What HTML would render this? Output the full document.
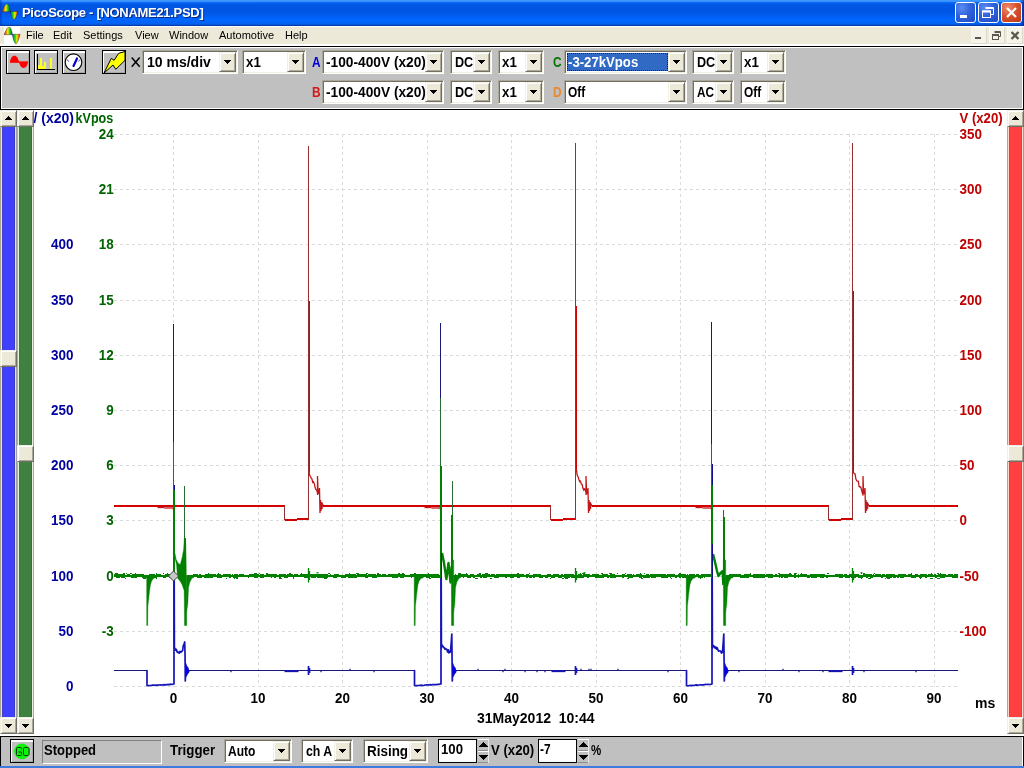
<!DOCTYPE html>
<html><head><meta charset="utf-8"><title>PicoScope</title>
<style>
*{box-sizing:border-box;margin:0;padding:0}
html,body{width:1024px;height:768px;overflow:hidden;background:#fff;font-family:"Liberation Sans",sans-serif}
#root{position:relative;width:1024px;height:768px;overflow:hidden;background:#fff;will-change:transform;opacity:0.9999}
.abs{position:absolute}
/* title bar */
#title{position:absolute;left:0;top:0;width:1024px;height:26px;
 background:linear-gradient(#3D95FF 0%,#3D95FF 5%,#0A68F2 10%,#0057E6 17%,#0054E0 35%,#005AEA 55%,#0066FF 75%,#0562F2 90%,#0455DC 95%,#0A3CA8 97%,#0A3CA8 100%)}
#title .tt{position:absolute;left:22px;top:5px;font-size:13px;font-weight:bold;color:#fff;letter-spacing:-0.3px;line-height:16px;text-shadow:1px 1px 0 #0A2A80;white-space:pre}
.wb{position:absolute;top:2px;width:21px;height:21px;border:1px solid #fff;border-radius:3px;
 background:radial-gradient(circle at 30% 25%,#5C8CF2 0%,#2F62DC 45%,#1E49C4 100%)}
.wb.cl{background:radial-gradient(circle at 30% 25%,#F0896A 0%,#D6502C 50%,#B8391A 100%)}
/* menu */
#menu{position:absolute;left:0;top:26px;width:1024px;height:20px;background:#ECE9D8;border-top:1px solid #fff;border-bottom:2px solid #fff}
#menu span{position:absolute;top:2px;font-size:11px;line-height:13px;color:#000}
.mb{position:absolute;top:27px;width:16px;height:17px;background:#F4F3EA;border:1px solid #F8F7F0;border-right-color:#DDDACB;border-bottom-color:#DDDACB}
/* toolbar */
#tb{position:absolute;left:0;top:46px;width:1024px;height:64px;background:#C0C0C0;border:1px solid #000;box-shadow:inset 1px 1px 0 #fff,inset -1px -1px 0 #fff}
.btn{position:absolute;width:24px;height:24px;background:#C0C0C0;border:1px solid #000;box-shadow:inset 1px 2px 0 #fff,inset -1px -1px 0 #A8A8A8}
.cb{position:absolute;background:#fff;border:1px solid;border-color:#ACA899 #fff #fff #ACA899;box-shadow:inset 1px 1px 0 #716F64,inset -1px -1px 0 #F1EFE2}
.ct{position:absolute;top:3px;font-size:14px;font-weight:bold;line-height:16px;color:#000;white-space:pre;transform-origin:0 50%}
.sel{position:absolute;left:2px;top:2px;height:18px;background:#316AC5;outline:1px dotted #1C2440;outline-offset:-1px}
.db{position:absolute;right:1px;top:1px;width:17px;height:20px;background:#ECE9D8;border:1px solid;border-color:#F1EFE2 #716F64 #716F64 #F1EFE2;box-shadow:inset 1px 1px 0 #fff,inset -1px -1px 0 #ACA899}
.db .ar{position:absolute;left:4px;top:7px;display:block}
.lab{position:absolute;font-size:14px;font-weight:bold;line-height:16px;white-space:pre;transform-origin:0 50%}
/* scrollbars */
.sb{position:absolute;width:17px;height:17px;background:#ECE9D8;border:1px solid;border-color:#F1EFE2 #716F64 #716F64 #F1EFE2;box-shadow:inset 1px 1px 0 #fff,inset -1px -1px 0 #ACA899}
.sb .ar{position:absolute;left:4px;top:5px;display:block}
.trk{position:absolute;width:17px;top:126px;height:592px}
/* status */
#st{position:absolute;left:0;top:736px;width:1024px;height:30px;background:#C0C0C0;border-top:1px solid #000;border-left:1px solid #000;border-right:1px solid #000;box-shadow:inset -1px 0 0 #fff}
.ed{position:absolute;background:#fff;border:1px solid #000}
.sp{position:absolute;width:11px;height:12px;background:#C0C0C0;box-shadow:inset 0 1px 0 #fff,inset -1px 0 0 #E8E8E8,inset 0 -1px 0 #909090}
.sp .ar{position:absolute;left:1px;display:block}
#plot{position:absolute;left:0;top:0}
</style></head>
<body><div id="root">
<svg id="plot" width="1024" height="768" viewBox="0 0 1024 768">
<g stroke="#DADADA" stroke-width="1" stroke-dasharray="3 3" shape-rendering="crispEdges"><line x1="114" x2="959" y1="134.5" y2="134.5"/><line x1="114" x2="959" y1="189.5" y2="189.5"/><line x1="114" x2="959" y1="244.5" y2="244.5"/><line x1="114" x2="959" y1="300.5" y2="300.5"/><line x1="114" x2="959" y1="355.5" y2="355.5"/><line x1="114" x2="959" y1="410.5" y2="410.5"/><line x1="114" x2="959" y1="465.5" y2="465.5"/><line x1="114" x2="959" y1="520.5" y2="520.5"/><line x1="114" x2="959" y1="576.5" y2="576.5"/><line x1="114" x2="959" y1="631.5" y2="631.5"/><line x1="114" x2="959" y1="686.5" y2="686.5"/><line x1="173.5" x2="173.5" y1="134" y2="687"/><line x1="258.5" x2="258.5" y1="134" y2="687"/><line x1="342.5" x2="342.5" y1="134" y2="687"/><line x1="427.5" x2="427.5" y1="134" y2="687"/><line x1="511.5" x2="511.5" y1="134" y2="687"/><line x1="596.5" x2="596.5" y1="134" y2="687"/><line x1="680.5" x2="680.5" y1="134" y2="687"/><line x1="765.5" x2="765.5" y1="134" y2="687"/><line x1="849.5" x2="849.5" y1="134" y2="687"/><line x1="934.5" x2="934.5" y1="134" y2="687"/></g>
<g font-family="Liberation Sans, sans-serif" font-weight="bold" font-size="14px"><text transform="translate(73.5,249) scale(0.96,1)" text-anchor="end" fill="#0000A0" style="white-space:pre">400</text><text transform="translate(73.5,305) scale(0.96,1)" text-anchor="end" fill="#0000A0" style="white-space:pre">350</text><text transform="translate(73.5,360) scale(0.96,1)" text-anchor="end" fill="#0000A0" style="white-space:pre">300</text><text transform="translate(73.5,415) scale(0.96,1)" text-anchor="end" fill="#0000A0" style="white-space:pre">250</text><text transform="translate(73.5,470) scale(0.96,1)" text-anchor="end" fill="#0000A0" style="white-space:pre">200</text><text transform="translate(73.5,525) scale(0.96,1)" text-anchor="end" fill="#0000A0" style="white-space:pre">150</text><text transform="translate(73.5,581) scale(0.96,1)" text-anchor="end" fill="#0000A0" style="white-space:pre">100</text><text transform="translate(73.5,636) scale(0.96,1)" text-anchor="end" fill="#0000A0" style="white-space:pre">50</text><text transform="translate(73.5,691) scale(0.96,1)" text-anchor="end" fill="#0000A0" style="white-space:pre">0</text><text transform="translate(113.8,139) scale(0.96,1)" text-anchor="end" fill="#006400" style="white-space:pre">24</text><text transform="translate(113.8,194) scale(0.96,1)" text-anchor="end" fill="#006400" style="white-space:pre">21</text><text transform="translate(113.8,249) scale(0.96,1)" text-anchor="end" fill="#006400" style="white-space:pre">18</text><text transform="translate(113.8,305) scale(0.96,1)" text-anchor="end" fill="#006400" style="white-space:pre">15</text><text transform="translate(113.8,360) scale(0.96,1)" text-anchor="end" fill="#006400" style="white-space:pre">12</text><text transform="translate(113.8,415) scale(0.96,1)" text-anchor="end" fill="#006400" style="white-space:pre">9</text><text transform="translate(113.8,470) scale(0.96,1)" text-anchor="end" fill="#006400" style="white-space:pre">6</text><text transform="translate(113.8,525) scale(0.96,1)" text-anchor="end" fill="#006400" style="white-space:pre">3</text><text transform="translate(113.8,581) scale(0.96,1)" text-anchor="end" fill="#006400" style="white-space:pre">0</text><text transform="translate(113.8,636) scale(0.96,1)" text-anchor="end" fill="#006400" style="white-space:pre">-3</text><text transform="translate(959.5,139) scale(0.96,1)" text-anchor="start" fill="#C00000" style="white-space:pre">350</text><text transform="translate(959.5,194) scale(0.96,1)" text-anchor="start" fill="#C00000" style="white-space:pre">300</text><text transform="translate(959.5,249) scale(0.96,1)" text-anchor="start" fill="#C00000" style="white-space:pre">250</text><text transform="translate(959.5,305) scale(0.96,1)" text-anchor="start" fill="#C00000" style="white-space:pre">200</text><text transform="translate(959.5,360) scale(0.96,1)" text-anchor="start" fill="#C00000" style="white-space:pre">150</text><text transform="translate(959.5,415) scale(0.96,1)" text-anchor="start" fill="#C00000" style="white-space:pre">100</text><text transform="translate(959.5,470) scale(0.96,1)" text-anchor="start" fill="#C00000" style="white-space:pre">50</text><text transform="translate(959.5,525) scale(0.96,1)" text-anchor="start" fill="#C00000" style="white-space:pre">0</text><text transform="translate(959.5,581) scale(0.96,1)" text-anchor="start" fill="#C00000" style="white-space:pre">-50</text><text transform="translate(959.5,636) scale(0.96,1)" text-anchor="start" fill="#C00000" style="white-space:pre">-100</text><text transform="translate(173.5,703) scale(0.96,1)" text-anchor="middle" fill="#000" style="white-space:pre">0</text><text transform="translate(258.0,703) scale(0.96,1)" text-anchor="middle" fill="#000" style="white-space:pre">10</text><text transform="translate(342.5,703) scale(0.96,1)" text-anchor="middle" fill="#000" style="white-space:pre">20</text><text transform="translate(427.0,703) scale(0.96,1)" text-anchor="middle" fill="#000" style="white-space:pre">30</text><text transform="translate(511.5,703) scale(0.96,1)" text-anchor="middle" fill="#000" style="white-space:pre">40</text><text transform="translate(596.0,703) scale(0.96,1)" text-anchor="middle" fill="#000" style="white-space:pre">50</text><text transform="translate(680.5,703) scale(0.96,1)" text-anchor="middle" fill="#000" style="white-space:pre">60</text><text transform="translate(765.0,703) scale(0.96,1)" text-anchor="middle" fill="#000" style="white-space:pre">70</text><text transform="translate(849.5,703) scale(0.96,1)" text-anchor="middle" fill="#000" style="white-space:pre">80</text><text transform="translate(934.0,703) scale(0.96,1)" text-anchor="middle" fill="#000" style="white-space:pre">90</text><text transform="translate(975,708) scale(1.0,1)" text-anchor="start" fill="#000" style="white-space:pre">ms</text><text transform="translate(477,723) scale(1.0,1)" text-anchor="start" fill="#000" style="white-space:pre">31May2012  10:44</text><text transform="translate(33.5,123) scale(1.0,1)" text-anchor="start" fill="#0000A0" style="white-space:pre">/ (x20)</text><text transform="translate(75.5,123) scale(0.9,1)" text-anchor="start" fill="#006400" style="white-space:pre">kVpos</text><text transform="translate(959.5,123) scale(0.94,1)" text-anchor="start" fill="#C00000" style="white-space:pre">V (x20)</text></g>
<g fill="none" stroke="#D40000" stroke-width="2" shape-rendering="crispEdges"><polyline points="114.0,506.0 284.5,506.0"/><polyline points="284.5,520.0 294.5,519.6 308.5,519.0"/><polyline points="309.0,301.0 309.0,472.0"/><polyline points="323.0,506.0 550.5,506.0"/><polyline points="550.5,520.0 560.5,519.6 575.5,519.0"/><polyline points="576.0,306.0 576.0,472.0"/><polyline points="591.5,506.0 828.5,506.0"/><polyline points="828.5,520.0 838.5,519.6 852.5,519.0"/><polyline points="853.0,291.0 853.0,472.0"/><polyline points="868.5,506.0 958.0,506.0"/></g><g fill="none" stroke="#983030" stroke-width="1" shape-rendering="crispEdges"><polyline points="284.5,506.0 284.5,520.0"/><polyline points="308.5,519.5 308.5,146.0"/><polyline points="550.5,506.0 550.5,520.0"/><polyline points="575.5,519.5 575.5,143.0"/><polyline points="828.5,506.0 828.5,520.0"/><polyline points="852.5,519.5 852.5,143.0"/></g><g fill="none" stroke="#C01818" stroke-width="1.3"><polyline points="309.0,470.0 309.5,474.6 310.3,476.4 311.1,478.0 311.9,478.9 312.7,482.3 313.5,481.7 314.3,483.7 315.1,487.6 315.9,489.5 316.7,490.4 317.5,492.7 317.5,495.0 317.5,476.0 318.0,490.0 319.0,494.0 319.5,488.0 320.0,513.0 320.5,500.0 321.0,511.0 321.5,502.0 322.0,509.0 322.5,504.0 323.5,506.0"/><polyline points="576.0,470.0 576.5,470.4 577.3,475.7 578.1,476.7 578.9,479.5 579.7,481.5 580.5,481.1 581.3,484.1 582.1,484.5 582.9,488.1 583.7,490.0 584.5,489.0 585.3,490.3 586.1,492.9 586.0,495.0 586.0,476.0 586.5,490.0 587.5,494.0 588.0,488.0 588.5,513.0 589.0,500.0 589.5,511.0 590.0,502.0 590.5,509.0 591.0,504.0 592.0,506.0"/><polyline points="853.0,470.0 853.5,472.6 854.3,473.6 855.1,473.9 855.9,479.0 856.7,480.7 857.5,481.2 858.3,481.4 859.1,486.6 859.9,487.0 860.7,486.9 861.5,489.7 862.3,492.8 863.1,495.6 863.0,495.0 863.0,476.0 863.5,490.0 864.5,494.0 865.0,488.0 865.5,513.0 866.0,500.0 866.5,511.0 867.0,502.0 867.5,509.0 868.0,504.0 869.0,506.0"/><polyline points="157.5,507.5 164.5,507.5"/><polyline points="164.5,508.0 173.5,508.0"/><polyline points="173.5,506.0 173.5,510.0"/><polyline points="424.5,507.5 431.5,507.5"/><polyline points="431.5,508.0 440.5,508.0"/><polyline points="440.5,506.0 440.5,510.0"/><polyline points="695.5,507.5 702.5,507.5"/><polyline points="702.5,508.0 711.5,508.0"/><polyline points="711.5,506.0 711.5,510.0"/></g><g fill="none" stroke="#18187C" stroke-width="1" shape-rendering="crispEdges"></g><g fill="none" stroke="#18187C" stroke-width="1.15"><polyline points="114.0,670.5 147.0,670.5"/><polyline points="189.0,670.5 230.5,670.5 231.0,671.5 231.5,670.5 320.5,670.5 321.0,671.5 321.5,670.5 349.5,670.5 350.0,669.5 350.5,670.5 373.5,670.5 374.0,671.5 374.5,670.5 414.5,670.5"/><polyline points="456.0,670.5 477.5,670.5 478.0,669.5 478.5,670.5 502.5,670.5 503.0,671.5 503.5,670.5 504.5,670.5 505.0,669.5 505.5,670.5 524.5,670.5 525.0,671.5 525.5,670.5 536.5,670.5 537.0,671.5 537.5,670.5 544.5,670.5 545.0,671.5 545.5,670.5 580.5,670.5 581.0,669.5 581.5,670.5 588.5,670.5 589.0,669.5 589.5,670.5 590.5,670.5 591.0,669.5 591.5,670.5 617.5,670.5 618.0,669.5 618.5,670.5 667.5,670.5 668.0,671.5 668.5,670.5 686.5,670.5"/><polyline points="728.0,670.5 738.5,670.5 739.0,671.5 739.5,670.5 782.5,670.5 783.0,669.5 783.5,670.5 798.5,670.5 799.0,671.5 799.5,670.5 822.5,670.5 823.0,671.5 823.5,670.5 863.5,670.5 864.0,671.5 864.5,670.5 915.5,670.5 916.0,671.5 916.5,670.5 958.0,670.5"/></g><g fill="none" stroke="#1414B8" stroke-width="1.7" stroke-linejoin="round"><polyline points="146.5,670.5 147.0,670.5 147.0,685.5 148.0,685.7 149.0,685.7 150.0,685.5 151.0,685.5 152.0,685.2 153.0,685.2 154.0,685.2 155.0,685.4 156.0,685.2 157.0,685.1 158.0,685.2 159.0,685.0 160.0,684.9 161.0,685.1 162.0,685.0 163.0,684.7 164.0,684.8 165.0,684.7 166.0,684.8 167.0,684.7 168.0,684.4 169.0,684.7 170.0,684.2 171.0,684.3 172.0,684.4 174.0,684.0 174.0,578.0"/><polyline points="174.2,578.0 174.4,648.0 175.0,648.5 175.7,650.2 176.4,649.4 177.1,651.9 177.8,652.5 178.5,652.2 179.2,653.2 179.9,651.3 180.6,652.4 181.3,651.7 182.0,651.2 182.7,650.2 183.2,646.0 184.0,644.0 184.7,642.0 185.0,652.0 185.3,681.0 185.8,664.0 186.3,676.0 186.8,666.5 187.3,674.0 187.8,668.0 188.3,672.5 189.0,670.5"/><polyline points="414.0,670.5 414.5,670.5 414.5,685.5 415.5,685.6 416.5,685.5 417.5,685.7 418.5,685.5 419.5,685.3 420.5,685.3 421.5,685.2 422.5,685.4 423.5,685.5 424.5,685.2 425.5,685.0 426.5,684.9 427.5,684.8 428.5,684.9 429.5,685.0 430.5,684.6 431.5,685.0 432.5,684.5 433.5,684.7 434.5,684.5 435.5,684.6 436.5,684.7 437.5,684.4 438.5,684.3 439.5,684.2 441.0,684.0 441.0,578.0"/><polyline points="441.2,578.0 441.4,648.0 442.0,644.9 442.7,646.3 443.4,646.8 444.1,647.7 444.8,649.0 445.5,648.5 446.2,649.5 446.9,649.4 447.6,652.0 448.3,649.9 449.0,653.0 449.7,651.3 450.5,652.0 451.4,640.0 451.8,634.0 452.0,652.0 452.3,681.0 452.8,664.0 453.3,676.0 453.8,666.5 454.3,674.0 454.8,668.0 455.3,672.5 456.0,670.5"/><polyline points="686.0,670.5 686.5,670.5 686.5,685.5 687.5,685.8 688.5,685.8 689.5,685.5 690.5,685.3 691.5,685.6 692.5,685.3 693.5,685.5 694.5,685.3 695.5,685.1 696.5,684.9 697.5,685.3 698.5,685.0 699.5,685.0 700.5,684.7 701.5,685.0 702.5,684.8 703.5,684.9 704.5,684.7 705.5,684.4 706.5,684.5 707.5,684.4 708.5,684.3 709.5,684.5 710.5,684.4 712.0,684.0 712.0,578.0"/><polyline points="712.2,578.0 712.4,648.0 713.0,645.8 713.7,645.7 714.4,647.0 715.1,648.1 715.8,646.9 716.5,649.1 717.2,647.7 717.9,649.6 718.6,651.1 719.3,650.8 720.0,651.0 720.7,651.1 721.4,653.0 722.5,652.0 723.4,640.0 723.8,634.0 724.0,652.0 724.3,681.0 724.8,664.0 725.3,676.0 725.8,666.5 726.3,674.0 726.8,668.0 727.3,672.5 728.0,670.5"/><polyline points="284.5,671.3 298.5,671.3"/><polyline points="308.5,666.0 308.5,675.0"/><polyline points="309.5,668.0 309.5,673.0"/><polyline points="551.5,671.3 565.5,671.3"/><polyline points="575.5,666.0 575.5,675.0"/><polyline points="576.5,668.0 576.5,673.0"/><polyline points="828.5,671.3 842.5,671.3"/><polyline points="852.5,666.0 852.5,675.0"/><polyline points="853.5,668.0 853.5,673.0"/></g><g fill="#0000F0" stroke="none"><polygon points="185.5,665.0 189.5,670.5 185.5,676.0"/><polygon points="452.5,665.0 456.5,670.5 452.5,676.0"/><polygon points="724.5,665.0 728.5,670.5 724.5,676.0"/></g><g fill="none" stroke="#008000" shape-rendering="crispEdges"><path stroke-width="2" d="M114 576H173M187 576H440M454 576H711M726 576H958"/><path stroke-width="1" d="M114 574.5h2M116 574.5h4M120 574.5h1M121 574.5h2M123 574.5h2M127 574.5h3M132 574.5h2M134 574.5h1M135 574.5h4M139 574.5h1M140 574.5h2M142 574.5h2M149 574.5h2M151 574.5h2M153 574.5h2M156 574.5h5M165 574.5h3M168 574.5h1M169 574.5h3M193 574.5h1M194 574.5h4M199 574.5h2M205 574.5h1M206 574.5h2M208 574.5h2M210 574.5h1M211 574.5h5M217 574.5h4M223 574.5h2M225 574.5h2M227 574.5h1M228 574.5h3M232 574.5h1M234 574.5h4M239 574.5h5M249 574.5h2M251 574.5h4M255 574.5h2M257 574.5h2M260 574.5h4M266 574.5h2M268 574.5h4M272 574.5h5M279 574.5h4M283 574.5h3M287 574.5h2M289 574.5h4M294 574.5h4M300 574.5h1M301 574.5h3M304 574.5h3M307 574.5h5M312 574.5h5M317 574.5h5M322 574.5h5M327 574.5h1M330 574.5h1M334 574.5h3M337 574.5h2M345 574.5h4M349 574.5h3M352 574.5h4M357 574.5h2M359 574.5h2M361 574.5h1M362 574.5h3M365 574.5h2M368 574.5h2M370 574.5h4M374 574.5h2M377 574.5h4M382 574.5h4M388 574.5h2M390 574.5h2M392 574.5h1M393 574.5h2M395 574.5h1M396 574.5h4M400 574.5h5M410 574.5h2M412 574.5h5M417 574.5h4M421 574.5h1M422 574.5h2M424 574.5h1M425 574.5h1M426 574.5h2M428 574.5h2M430 574.5h3M433 574.5h4M437 574.5h2M455 574.5h1M458 574.5h5M463 574.5h5M470 574.5h4M477 574.5h4M482 574.5h1M483 574.5h4M487 574.5h2M489 574.5h1M491 574.5h4M496 574.5h2M498 574.5h5M503 574.5h5M508 574.5h4M512 574.5h2M514 574.5h5M519 574.5h5M526 574.5h3M533 574.5h1M534 574.5h5M539 574.5h2M547 574.5h4M553 574.5h4M557 574.5h2M561 574.5h2M564 574.5h3M567 574.5h2M569 574.5h5M578 574.5h4M583 574.5h5M588 574.5h2M592 574.5h2M594 574.5h1M595 574.5h4M602 574.5h1M603 574.5h5M610 574.5h1M611 574.5h4M622 574.5h2M624 574.5h1M627 574.5h5M633 574.5h1M636 574.5h2M638 574.5h2M640 574.5h2M646 574.5h2M648 574.5h1M650 574.5h1M651 574.5h5M656 574.5h4M660 574.5h1M661 574.5h2M663 574.5h1M664 574.5h2M667 574.5h3M670 574.5h5M678 574.5h4M682 574.5h2M684 574.5h2M687 574.5h1M689 574.5h5M694 574.5h1M696 574.5h3M701 574.5h5M706 574.5h2M708 574.5h3M729 574.5h5M734 574.5h3M737 574.5h4M744 574.5h4M748 574.5h3M753 574.5h3M756 574.5h2M758 574.5h2M760 574.5h5M766 574.5h2M768 574.5h5M775 574.5h2M779 574.5h4M783 574.5h2M785 574.5h2M787 574.5h5M794 574.5h2M798 574.5h1M800 574.5h3M803 574.5h1M804 574.5h3M810 574.5h2M812 574.5h5M817 574.5h5M822 574.5h3M835 574.5h3M838 574.5h5M844 574.5h3M849 574.5h3M852 574.5h1M854 574.5h5M863 574.5h4M867 574.5h5M873 574.5h1M875 574.5h5M880 574.5h1M882 574.5h3M886 574.5h5M891 574.5h4M898 574.5h1M899 574.5h3M902 574.5h1M903 574.5h3M908 574.5h2M910 574.5h2M915 574.5h2M917 574.5h1M920 574.5h5M925 574.5h2M928 574.5h5M934 574.5h2M938 574.5h3M941 574.5h2M943 574.5h3M948 574.5h5M954 574.5h2M956 574.5h2M116 577.5h2M118 577.5h2M121 577.5h4M131 577.5h4M135 577.5h2M142 577.5h5M151 577.5h5M156 577.5h1M163 577.5h3M169 577.5h4M189 577.5h2M197 577.5h5M204 577.5h4M208 577.5h5M217 577.5h5M229 577.5h2M233 577.5h2M235 577.5h3M248 577.5h1M254 577.5h1M255 577.5h3M260 577.5h4M271 577.5h1M274 577.5h2M279 577.5h2M284 577.5h1M285 577.5h3M293 577.5h1M304 577.5h5M311 577.5h5M317 577.5h1M318 577.5h1M319 577.5h4M323 577.5h5M333 577.5h4M341 577.5h5M348 577.5h2M350 577.5h4M354 577.5h3M365 577.5h3M372 577.5h5M392 577.5h3M395 577.5h1M396 577.5h2M400 577.5h4M411 577.5h1M419 577.5h4M426 577.5h4M431 577.5h1M432 577.5h5M437 577.5h4M457 577.5h3M463 577.5h1M467 577.5h4M473 577.5h2M480 577.5h2M483 577.5h4M494 577.5h4M498 577.5h1M505 577.5h2M510 577.5h4M517 577.5h2M519 577.5h1M526 577.5h2M529 577.5h3M533 577.5h2M539 577.5h4M545 577.5h3M551 577.5h2M553 577.5h2M558 577.5h1M559 577.5h3M564 577.5h3M567 577.5h1M568 577.5h2M571 577.5h1M572 577.5h3M575 577.5h4M579 577.5h5M587 577.5h2M595 577.5h5M600 577.5h4M607 577.5h2M610 577.5h4M614 577.5h2M622 577.5h2M628 577.5h5M639 577.5h3M643 577.5h5M648 577.5h2M651 577.5h5M661 577.5h5M666 577.5h2M670 577.5h1M675 577.5h2M679 577.5h2M682 577.5h5M688 577.5h4M698 577.5h2M700 577.5h3M704 577.5h1M732 577.5h1M740 577.5h4M744 577.5h5M753 577.5h2M755 577.5h3M758 577.5h5M763 577.5h2M768 577.5h5M779 577.5h1M781 577.5h2M784 577.5h4M794 577.5h2M798 577.5h1M807 577.5h3M811 577.5h2M813 577.5h4M820 577.5h2M822 577.5h2M826 577.5h1M827 577.5h1M839 577.5h4M845 577.5h5M851 577.5h5M858 577.5h1M859 577.5h4M866 577.5h2M870 577.5h3M881 577.5h2M886 577.5h2M888 577.5h4M893 577.5h3M897 577.5h2M900 577.5h4M911 577.5h5M919 577.5h3M925 577.5h2M935 577.5h2M940 577.5h5M952 577.5h4M956 577.5h2M115 573.5h3M123 573.5h2M126 573.5h1M130 573.5h2M135 573.5h1M156 573.5h1M163 573.5h1M167 573.5h1M208 573.5h1M218 573.5h1M254 573.5h3M259 573.5h1M266 573.5h2M289 573.5h2M301 573.5h1M328 573.5h2M349 573.5h1M356 573.5h3M366 573.5h2M377 573.5h2M398 573.5h2M402 573.5h2M414 573.5h2M428 573.5h1M458 573.5h3M466 573.5h1M479 573.5h2M485 573.5h3M517 573.5h2M529 573.5h1M580 573.5h1M582 573.5h3M601 573.5h2M609 573.5h3M617 573.5h1M625 573.5h1M640 573.5h1M644 573.5h1M679 573.5h2M750 573.5h1M778 573.5h2M789 573.5h2M794 573.5h3M801 573.5h1M827 573.5h2M861 573.5h1M863 573.5h2M874 573.5h1M911 573.5h1M931 573.5h1M937 573.5h2M940 573.5h1M125 578.5h1M143 578.5h3M156 578.5h1M226 578.5h1M234 578.5h1M236 578.5h2M279 578.5h3M293 578.5h1M324 578.5h3M417 578.5h2M429 578.5h2M475 578.5h3M490 578.5h2M550 578.5h1M562 578.5h2M565 578.5h3M627 578.5h2M641 578.5h2M671 578.5h1M700 578.5h1M861 578.5h1M868 578.5h3M885 578.5h1M887 578.5h3M920 578.5h1M930 578.5h3M937 578.5h3"/></g><g fill="#008000" stroke="#008000" stroke-width="0.4"><polygon points="146.7,576.0 146.7,625.5 147.7,625.5 147.9,606.0 148.6,600.0 149.0,596.0 149.7,590.0 150.4,585.0 151.6,581.0 153.5,578.5 156.0,577.5 156.0,576.0"/><polygon points="174.8,553.0 176.2,559.5 178.0,563.0 180.3,564.5 182.0,558.0 183.7,549.0 184.3,538.0 185.9,545.0 186.7,600.0 186.7,625.5 184.5,625.5 184.3,600.0 184.1,590.5 182.0,584.5 180.0,581.0 178.0,578.8 177.5,577.5 176.5,564.5 174.8,557.5"/><polygon points="186.5,575.5 186.5,612.0 187.8,604.0 188.5,587.5 189.9,582.0 192.0,578.3 194.0,577.3 194.0,575.5"/><polygon points="414.2,576.0 414.2,625.5 415.2,625.5 415.4,606.0 416.1,600.0 416.5,596.0 417.2,590.0 417.9,585.0 419.1,581.0 421.0,578.5 423.5,577.5 423.5,576.0"/><polygon points="451.3,560.0 453.7,560.0 453.7,625.5 451.5,625.5"/><polygon points="453.5,575.5 453.5,612.0 454.8,604.0 455.5,587.5 456.9,582.0 459.0,578.3 461.0,577.3 461.0,575.5"/><polygon points="686.2,576.0 686.2,625.5 687.2,625.5 687.4,606.0 688.1,600.0 688.5,596.0 689.2,590.0 689.9,585.0 691.1,581.0 693.0,578.5 695.5,577.5 695.5,576.0"/><polygon points="723.3,560.0 725.7,560.0 725.7,625.5 723.5,625.5"/><polygon points="725.5,575.5 725.5,612.0 726.8,604.0 727.5,587.5 728.9,582.0 731.0,578.3 733.0,577.3 733.0,575.5"/></g><g fill="none" stroke="#008000" stroke-width="2.4" stroke-linejoin="round"><polyline points="442.0,553.0 444.0,563.0 446.4,579.0 448.5,563.0 450.5,582.5 451.8,566.0"/><polyline points="713.0,554.0 715.0,562.0 717.0,571.0 718.4,576.0 720.5,573.0 722.5,571.0 723.4,585.0"/></g><g shape-rendering="crispEdges"><rect x="173" y="324" width="1" height="118" fill="#18187C"/><rect x="173" y="442" width="1" height="48" fill="#2A6A34"/><rect x="174" y="485" width="1" height="5" fill="#10108C"/><rect x="173" y="490" width="1" height="88" fill="#008000"/><rect x="174" y="490" width="1" height="88" fill="#008000"/><rect x="184" y="486" width="1" height="52" fill="#2A6A34"/><rect x="184" y="538" width="1" height="24" fill="#008000"/><rect x="185" y="538" width="1" height="24" fill="#008000"/><rect x="440" y="323" width="1" height="75" fill="#18187C"/><rect x="440" y="398" width="1" height="68" fill="#2A6A34"/><rect x="440" y="466" width="1" height="112" fill="#008000"/><rect x="441" y="466" width="1" height="87" fill="#008000"/><rect x="441" y="553" width="1" height="25" fill="#10108C"/><rect x="452" y="481" width="1" height="34" fill="#2A6A34"/><rect x="451" y="515" width="1" height="63" fill="#008000"/><rect x="452" y="515" width="1" height="63" fill="#008000"/><rect x="711" y="322" width="1" height="122" fill="#18187C"/><rect x="711" y="444" width="1" height="41" fill="#2A6A34"/><rect x="712" y="464" width="1" height="21" fill="#10108C"/><rect x="711" y="485" width="1" height="93" fill="#008000"/><rect x="712" y="485" width="1" height="59" fill="#008000"/><rect x="712" y="544" width="1" height="34" fill="#10108C"/><rect x="723" y="510" width="1" height="7" fill="#2A6A34"/><rect x="723" y="517" width="1" height="61" fill="#008000"/><rect x="724" y="517" width="1" height="61" fill="#008000"/></g><g fill="none" stroke="#008000" stroke-width="1.3"><polyline points="308.5,568.0 308.5,582.5"/><polyline points="309.5,571.0 309.5,580.0"/><polyline points="316.5,572.8 318.5,572.8"/><polyline points="575.5,568.0 575.5,582.5"/><polyline points="576.5,571.0 576.5,580.0"/><polyline points="583.5,572.8 585.5,572.8"/><polyline points="852.5,568.0 852.5,582.5"/><polyline points="853.5,571.0 853.5,580.0"/><polyline points="860.5,572.8 862.5,572.8"/></g><polygon points="173.5,571 178.5,576 173.5,581 168.5,576" fill="#C8C8C8" stroke="#404040" stroke-width="1"/>
</svg>
<!-- scrollbars -->
<div class="trk" style="left:0;background:linear-gradient(90deg,#A8A490 0px,#A8A490 1px,#E0E0FF 1px,#E0E0FF 2px,#4040C8 2px,#4040C8 3px,#4040FF 3px,#4040FF 4px,#4040FF 4px,#4040FF 5px,#4040FF 5px,#4040FF 6px,#4040FF 6px,#4040FF 7px,#4040FF 7px,#4040FF 8px,#4040FF 8px,#4040FF 9px,#4040FF 9px,#4040FF 10px,#4040FF 10px,#4040FF 11px,#4040FF 11px,#4040FF 12px,#4040FF 12px,#4040FF 13px,#4040FF 13px,#4040FF 14px,#3C3CC4 14px,#3C3CC4 15px,#E0E0FF 15px,#E0E0FF 16px,#A0A0A0 16px,#A0A0A0 17px)"></div>
<div class="trk" style="left:17px;background:linear-gradient(90deg,#B0B0A0 0px,#B0B0A0 1px,#E0F4D8 1px,#E0F4D8 2px,#3C7840 2px,#3C7840 3px,#408040 3px,#408040 4px,#408040 4px,#408040 5px,#408040 5px,#408040 6px,#408040 6px,#408040 7px,#408040 7px,#408040 8px,#408040 8px,#408040 9px,#408040 9px,#408040 10px,#408040 10px,#408040 11px,#408040 11px,#408040 12px,#408040 12px,#408040 13px,#408040 13px,#408040 14px,#3A7038 14px,#3A7038 15px,#E8F0E0 15px,#E8F0E0 16px,#A8A898 16px,#A8A898 17px)"></div>
<div class="trk" style="left:1007px;background:linear-gradient(90deg,#B8A098 0px,#B8A098 1px,#FFD8CC 1px,#FFD8CC 2px,#CC4646 2px,#CC4646 3px,#FF4040 3px,#FF4040 4px,#FF4040 4px,#FF4040 5px,#FF4040 5px,#FF4040 6px,#FF4040 6px,#FF4040 7px,#FF4040 7px,#FF4040 8px,#FF4040 8px,#FF4040 9px,#FF4040 9px,#FF4040 10px,#FF4040 10px,#FF4040 11px,#FF4040 11px,#FF4040 12px,#FF4040 12px,#FF4040 13px,#FF4040 13px,#FF4040 14px,#D84242 14px,#D84242 15px,#FFDCD0 15px,#FFDCD0 16px,#A0A08C 16px,#A0A08C 17px)"></div>
<div class="sb" style="left:0;top:110px"><svg class="ar" width="7" height="4" shape-rendering="crispEdges"><rect x="0" y="3" width="7" height="1"/><rect x="1" y="2" width="5" height="1"/><rect x="2" y="1" width="3" height="1"/><rect x="3" y="0" width="1" height="1"/></svg></div>
<div class="sb" style="left:17px;top:110px"><svg class="ar" width="7" height="4" shape-rendering="crispEdges"><rect x="0" y="3" width="7" height="1"/><rect x="1" y="2" width="5" height="1"/><rect x="2" y="1" width="3" height="1"/><rect x="3" y="0" width="1" height="1"/></svg></div>
<div class="sb" style="left:1007px;top:110px"><svg class="ar" width="7" height="4" shape-rendering="crispEdges"><rect x="0" y="3" width="7" height="1"/><rect x="1" y="2" width="5" height="1"/><rect x="2" y="1" width="3" height="1"/><rect x="3" y="0" width="1" height="1"/></svg></div>
<div class="sb" style="left:0;top:717px"><svg class="ar" style="top:6px" width="7" height="4" shape-rendering="crispEdges"><rect x="0" y="0" width="7" height="1"/><rect x="1" y="1" width="5" height="1"/><rect x="2" y="2" width="3" height="1"/><rect x="3" y="3" width="1" height="1"/></svg></div>
<div class="sb" style="left:17px;top:717px"><svg class="ar" style="top:6px" width="7" height="4" shape-rendering="crispEdges"><rect x="0" y="0" width="7" height="1"/><rect x="1" y="1" width="5" height="1"/><rect x="2" y="2" width="3" height="1"/><rect x="3" y="3" width="1" height="1"/></svg></div>
<div class="sb" style="left:1007px;top:717px"><svg class="ar" style="top:6px" width="7" height="4" shape-rendering="crispEdges"><rect x="0" y="0" width="7" height="1"/><rect x="1" y="1" width="5" height="1"/><rect x="2" y="2" width="3" height="1"/><rect x="3" y="3" width="1" height="1"/></svg></div>
<div class="sb" style="left:0;top:350px;height:17px"></div>
<div class="sb" style="left:17px;top:445px;height:17px"></div>
<div class="sb" style="left:1007px;top:445px;height:17px"></div>

<!-- title bar -->
<div id="title">
<svg class="abs" style="left:2px;top:4px" width="17" height="17" viewBox="0 0 17 17">
<defs><linearGradient id="g1" x1="0" x2="1" y1="0" y2="0"><stop offset="0" stop-color="#E01010"/><stop offset=".25" stop-color="#F08000"/><stop offset=".45" stop-color="#F0F000"/><stop offset=".7" stop-color="#20C820"/><stop offset=".88" stop-color="#108030"/><stop offset="1" stop-color="#102070"/></linearGradient>
<linearGradient id="g2" x1="0" x2="1" y1="0" y2="0"><stop offset="0" stop-color="#102070"/><stop offset=".15" stop-color="#10A030"/><stop offset=".4" stop-color="#30D820"/><stop offset=".6" stop-color="#F0F000"/><stop offset=".8" stop-color="#F08000"/><stop offset="1" stop-color="#D01010"/></linearGradient></defs>
<path d="M0 7.700 C1.500 5 2.800 0 5 0 C7 0 7.800 4 8.400 7.700 Z" fill="url(#g1)" stroke="#202048" stroke-width="0.600" stroke-opacity="0.700"/>
<path d="M8.300 7.500 L15.800 7.500 C15.300 10 13.500 15.400 11.800 15.400 C10 15.400 8.800 10 8.300 7.500 Z" fill="url(#g2)" stroke="#202048" stroke-width="0.600" stroke-opacity="0.700"/>
</svg>
<span class="tt">PicoScope - [NONAME21.PSD]</span>
<div class="abs" style="left:1020px;top:0;width:4px;height:26px;background:linear-gradient(90deg,rgba(0,40,170,0),rgba(0,30,150,.75))"></div><div class="abs" style="left:0;top:0;width:3px;height:26px;background:linear-gradient(90deg,rgba(0,40,170,.5),rgba(0,40,170,0))"></div>
<div class="wb" style="left:955px"><svg width="19" height="19"><rect x="4" y="12" width="7" height="3" fill="#fff"/></svg></div>
<div class="wb" style="left:978px"><svg width="19" height="19"><path d="M6.5 4.5h8v7h-2.5M6.5 5.5h8" stroke="#fff" stroke-width="1" fill="none"/><rect x="3.5" y="8" width="8" height="6.5" stroke="#fff" fill="none"/><path d="M3.5 8.5h8" stroke="#fff" stroke-width="2"/></svg></div>
<div class="wb cl" style="left:1001px"><svg width="19" height="19"><path d="M5 5l9 9M14 5l-9 9" stroke="#fff" stroke-width="2.2"/></svg></div>
</div>

<!-- menu -->
<div id="menu">
<div class="abs" style="left:4px;top:0;width:16px;height:17px;background:#fff"></div>
<svg class="abs" style="left:4px;top:0" width="17" height="18" viewBox="0 0 17 18">
<path d="M0 7.700 C1.500 5 2.800 0 5 0 C7 0 7.800 4 8.400 7.700 Z" fill="url(#g1)" stroke="#202048" stroke-width="0.600" stroke-opacity="0.700"/>
<path d="M8.200 7.300 L16 7.300 C15.500 10 13.700 16.800 12 16.800 C10.200 16.800 8.800 10 8.200 7.300 Z" fill="url(#g2)" stroke="#202048" stroke-width="0.600" stroke-opacity="0.700"/>
</svg>
<span style="left:26px">File</span><span style="left:53px">Edit</span><span style="left:83px">Settings</span><span style="left:135px">View</span><span style="left:169px">Window</span><span style="left:219px">Automotive</span><span style="left:285px">Help</span>
</div>
<div class="mb" style="left:971px"><svg width="14" height="15"><rect x="3" y="9" width="6" height="2" fill="#5A584C"/></svg></div>
<div class="mb" style="left:989px"><svg width="13" height="15"><path d="M4.5 3.5h6v5h-2M4.500 4.500h6" stroke="#5A584C" fill="none"/><rect x="2.5" y="6.500" width="6" height="5" stroke="#5A584C" fill="none"/><path d="M2.500 7.500h6" stroke="#5A584C"/></svg></div>
<div class="mb" style="left:1007px"><svg width="14" height="15"><path d="M3.500 4l7 7M10.500 4l-7 7" stroke="#5A584C" stroke-width="2.400"/></svg></div>

<!-- toolbar -->
<div id="tb"></div>
<div class="btn" style="left:6px;top:50px"><svg width="22" height="22"><path d="M3 11.500 Q3.500 5 7.500 4.500 Q11 5 12 11.500 Z" fill="#F00"/><path d="M12 11 L21 11 Q20.500 16.500 16.500 17 Q13 16.500 12 11 Z" fill="#F00"/><path d="M3 11h18" stroke="#F00" stroke-width="1.300"/></svg></div>
<div class="btn" style="left:34px;top:50px"><svg width="22" height="22" shape-rendering="crispEdges"><path d="M3 14h2v5h-2zM5 7h2v12h-2zM7 15h2v4h-2zM9 11h2v8h-2zM15 7h2v12h-2z" fill="#FFFF20"/><path d="M2.500 3v15.500h17.500" stroke="#000" fill="none"/></svg></div>
<div class="btn" style="left:62px;top:50px"><svg width="22" height="22"><circle cx="10.500" cy="11.200" r="8.300" fill="#fff" stroke="#000" stroke-width="1.100"/><path d="M10.500 15L14 7.500" stroke="#0000D8" stroke-width="2.200" stroke-linecap="round"/><path d="M4 8.800l2 1.700M17 8.800l-1.800 1.700" stroke="#2020A0" stroke-width="0.800"/></svg></div>
<div class="btn" style="left:102px;top:50px;overflow:hidden"><svg class="abs" style="left:-1px;top:-1px" width="24" height="24"><path d="M2 23 L9.300 8.300 L12.100 10.300 L16.700 3.300 L23 1.500 L23 10.300 L13.800 19.300 L11 15 Z" fill="#FFFF00" stroke="#000" stroke-width="1" stroke-linejoin="miter"/></svg></div>
<svg class="abs" style="left:130px;top:56px" width="12" height="12"><path d="M1.700 1.500l8 9.300M9.700 1.500l-8 9.300" stroke="#000" stroke-width="1.500" fill="none"/></svg>
<div class="cb" style="left:142px;top:50px;width:96px;height:24px"><span class="ct" style="left:4px;top:3px;transform:scaleX(1.0)">10 ms/div</span><div class="db"><svg class="ar" width="7" height="4" shape-rendering="crispEdges"><rect x="0" y="0" width="7" height="1"/><rect x="1" y="1" width="5" height="1"/><rect x="2" y="2" width="3" height="1"/><rect x="3" y="3" width="1" height="1"/></svg></div></div>
<div class="cb" style="left:242px;top:50px;width:64px;height:24px"><span class="ct" style="left:3px;top:3px;transform:scaleX(0.95)">x1</span><div class="db"><svg class="ar" width="7" height="4" shape-rendering="crispEdges"><rect x="0" y="0" width="7" height="1"/><rect x="1" y="1" width="5" height="1"/><rect x="2" y="2" width="3" height="1"/><rect x="3" y="3" width="1" height="1"/></svg></div></div>
<span class="lab" style="left:312px;top:54px;color:#0000D0;transform:scaleX(0.85)">A</span>
<div class="cb" style="left:322px;top:50px;width:122px;height:24px"><span class="ct" style="left:3px;top:3px;transform:scaleX(0.98)">-100-400V (x20)</span><div class="db"><svg class="ar" width="7" height="4" shape-rendering="crispEdges"><rect x="0" y="0" width="7" height="1"/><rect x="1" y="1" width="5" height="1"/><rect x="2" y="2" width="3" height="1"/><rect x="3" y="3" width="1" height="1"/></svg></div></div>
<div class="cb" style="left:450px;top:50px;width:42px;height:24px"><span class="ct" style="left:4px;top:3px;transform:scaleX(0.9)">DC</span><div class="db"><svg class="ar" width="7" height="4" shape-rendering="crispEdges"><rect x="0" y="0" width="7" height="1"/><rect x="1" y="1" width="5" height="1"/><rect x="2" y="2" width="3" height="1"/><rect x="3" y="3" width="1" height="1"/></svg></div></div>
<div class="cb" style="left:498px;top:50px;width:46px;height:24px"><span class="ct" style="left:3px;top:3px;transform:scaleX(0.95)">x1</span><div class="db"><svg class="ar" width="7" height="4" shape-rendering="crispEdges"><rect x="0" y="0" width="7" height="1"/><rect x="1" y="1" width="5" height="1"/><rect x="2" y="2" width="3" height="1"/><rect x="3" y="3" width="1" height="1"/></svg></div></div>
<span class="lab" style="left:312px;top:84px;color:#D01818;transform:scaleX(0.85)">B</span>
<div class="cb" style="left:322px;top:80px;width:122px;height:24px"><span class="ct" style="left:3px;top:3px;transform:scaleX(0.98)">-100-400V (x20)</span><div class="db"><svg class="ar" width="7" height="4" shape-rendering="crispEdges"><rect x="0" y="0" width="7" height="1"/><rect x="1" y="1" width="5" height="1"/><rect x="2" y="2" width="3" height="1"/><rect x="3" y="3" width="1" height="1"/></svg></div></div>
<div class="cb" style="left:450px;top:80px;width:42px;height:24px"><span class="ct" style="left:4px;top:3px;transform:scaleX(0.9)">DC</span><div class="db"><svg class="ar" width="7" height="4" shape-rendering="crispEdges"><rect x="0" y="0" width="7" height="1"/><rect x="1" y="1" width="5" height="1"/><rect x="2" y="2" width="3" height="1"/><rect x="3" y="3" width="1" height="1"/></svg></div></div>
<div class="cb" style="left:498px;top:80px;width:46px;height:24px"><span class="ct" style="left:3px;top:3px;transform:scaleX(0.95)">x1</span><div class="db"><svg class="ar" width="7" height="4" shape-rendering="crispEdges"><rect x="0" y="0" width="7" height="1"/><rect x="1" y="1" width="5" height="1"/><rect x="2" y="2" width="3" height="1"/><rect x="3" y="3" width="1" height="1"/></svg></div></div>
<span class="lab" style="left:553px;top:54px;color:#007800;transform:scaleX(0.85)">C</span>
<div class="cb" style="left:564px;top:50px;width:123px;height:24px"><div class="sel" style="width:101px"></div><span class="ct" style="left:3px;top:3px;transform:scaleX(0.94);color:#fff">-3-27kVpos</span><div class="db"><svg class="ar" width="7" height="4" shape-rendering="crispEdges"><rect x="0" y="0" width="7" height="1"/><rect x="1" y="1" width="5" height="1"/><rect x="2" y="2" width="3" height="1"/><rect x="3" y="3" width="1" height="1"/></svg></div></div>
<div class="cb" style="left:692px;top:50px;width:42px;height:24px"><span class="ct" style="left:4px;top:3px;transform:scaleX(0.9)">DC</span><div class="db"><svg class="ar" width="7" height="4" shape-rendering="crispEdges"><rect x="0" y="0" width="7" height="1"/><rect x="1" y="1" width="5" height="1"/><rect x="2" y="2" width="3" height="1"/><rect x="3" y="3" width="1" height="1"/></svg></div></div>
<div class="cb" style="left:740px;top:50px;width:46px;height:24px"><span class="ct" style="left:3px;top:3px;transform:scaleX(0.95)">x1</span><div class="db"><svg class="ar" width="7" height="4" shape-rendering="crispEdges"><rect x="0" y="0" width="7" height="1"/><rect x="1" y="1" width="5" height="1"/><rect x="2" y="2" width="3" height="1"/><rect x="3" y="3" width="1" height="1"/></svg></div></div>
<span class="lab" style="left:553px;top:84px;color:#E88830;transform:scaleX(0.85)">D</span>
<div class="cb" style="left:564px;top:80px;width:123px;height:24px"><span class="ct" style="left:3px;top:3px;transform:scaleX(0.85)">Off</span><div class="db"><svg class="ar" width="7" height="4" shape-rendering="crispEdges"><rect x="0" y="0" width="7" height="1"/><rect x="1" y="1" width="5" height="1"/><rect x="2" y="2" width="3" height="1"/><rect x="3" y="3" width="1" height="1"/></svg></div></div>
<div class="cb" style="left:692px;top:80px;width:42px;height:24px"><span class="ct" style="left:4px;top:3px;transform:scaleX(0.84)">AC</span><div class="db"><svg class="ar" width="7" height="4" shape-rendering="crispEdges"><rect x="0" y="0" width="7" height="1"/><rect x="1" y="1" width="5" height="1"/><rect x="2" y="2" width="3" height="1"/><rect x="3" y="3" width="1" height="1"/></svg></div></div>
<div class="cb" style="left:740px;top:80px;width:46px;height:24px"><span class="ct" style="left:3px;top:3px;transform:scaleX(0.85)">Off</span><div class="db"><svg class="ar" width="7" height="4" shape-rendering="crispEdges"><rect x="0" y="0" width="7" height="1"/><rect x="1" y="1" width="5" height="1"/><rect x="2" y="2" width="3" height="1"/><rect x="3" y="3" width="1" height="1"/></svg></div></div>
<!-- status bar -->
<div id="st"></div>
<div class="btn" style="left:10px;top:739px"><svg width="22" height="22"><circle cx="10.900" cy="11.400" r="7.800" fill="#0CF20C"/><g fill="none" stroke="#004000" stroke-width="1"><path d="M10.500 9.500v-1q0 -1 -1 -1h-3q-1 0 -1 1v6q0 1 1 1h3q1 0 1 -1v-2.500h-3"/><rect x="12.500" y="7.500" width="5.500" height="8" rx="1.200"/></g></svg></div>
<div class="abs" style="left:42px;top:740px;width:120px;height:24px;border:1px solid;border-color:#808080 #fff #fff #808080"></div>
<span class="lab" style="left:44px;top:742px;color:#000;transform:scaleX(0.93)">Stopped</span>
<span class="lab" style="left:170px;top:742px;color:#000;transform:scaleX(0.95)">Trigger</span>
<div class="cb" style="left:224px;top:739px;width:68px;height:24px"><span class="ct" style="left:3px;top:3px;transform:scaleX(0.86)">Auto</span><div class="db"><svg class="ar" width="7" height="4" shape-rendering="crispEdges"><rect x="0" y="0" width="7" height="1"/><rect x="1" y="1" width="5" height="1"/><rect x="2" y="2" width="3" height="1"/><rect x="3" y="3" width="1" height="1"/></svg></div></div>
<div class="cb" style="left:301px;top:739px;width:52px;height:24px"><span class="ct" style="left:4px;top:3px;transform:scaleX(0.88)">ch A</span><div class="db"><svg class="ar" width="7" height="4" shape-rendering="crispEdges"><rect x="0" y="0" width="7" height="1"/><rect x="1" y="1" width="5" height="1"/><rect x="2" y="2" width="3" height="1"/><rect x="3" y="3" width="1" height="1"/></svg></div></div>
<div class="cb" style="left:363px;top:739px;width:65px;height:24px"><span class="ct" style="left:3px;top:3px;transform:scaleX(0.96)">Rising</span><div class="db"><svg class="ar" width="7" height="4" shape-rendering="crispEdges"><rect x="0" y="0" width="7" height="1"/><rect x="1" y="1" width="5" height="1"/><rect x="2" y="2" width="3" height="1"/><rect x="3" y="3" width="1" height="1"/></svg></div></div>
<div class="ed" style="left:438px;top:739px;width:39px;height:24px"><span class="ct" style="left:1.5px;top:1px;transform:scaleX(0.94)">100</span></div>
<div class="sp" style="left:478px;top:739px;height:12px"><svg class="ar" style="top:3px" width="9" height="5" shape-rendering="crispEdges"><rect x="4" y="0" width="1" height="1"/><rect x="3" y="1" width="3" height="1"/><rect x="2" y="2" width="5" height="1"/><rect x="1" y="3" width="7" height="1"/><rect x="0" y="4" width="9" height="1"/></svg></div><div class="sp" style="left:478px;top:751px;height:12px"><svg class="ar" style="top:4px" width="9" height="5" shape-rendering="crispEdges"><rect x="4" y="4" width="1" height="1"/><rect x="3" y="3" width="3" height="1"/><rect x="2" y="2" width="5" height="1"/><rect x="1" y="1" width="7" height="1"/><rect x="0" y="0" width="9" height="1"/></svg></div>
<span class="lab" style="left:491px;top:742px;color:#000;transform:scaleX(0.94)">V (x20)</span>
<div class="ed" style="left:538px;top:739px;width:39px;height:24px"><span class="ct" style="left:1px;top:1px;transform:scaleX(0.85)">-7</span></div>
<div class="sp" style="left:578px;top:739px;height:12px"><svg class="ar" style="top:3px" width="9" height="5" shape-rendering="crispEdges"><rect x="4" y="0" width="1" height="1"/><rect x="3" y="1" width="3" height="1"/><rect x="2" y="2" width="5" height="1"/><rect x="1" y="3" width="7" height="1"/><rect x="0" y="4" width="9" height="1"/></svg></div><div class="sp" style="left:578px;top:751px;height:12px"><svg class="ar" style="top:4px" width="9" height="5" shape-rendering="crispEdges"><rect x="4" y="4" width="1" height="1"/><rect x="3" y="3" width="3" height="1"/><rect x="2" y="2" width="5" height="1"/><rect x="1" y="1" width="7" height="1"/><rect x="0" y="0" width="9" height="1"/></svg></div>
<span class="lab" style="left:591px;top:742px;color:#000;transform:scaleX(0.82)">%</span>
<div class="abs" style="left:0;top:766px;width:1024px;height:2px;background:#3D7BE0"></div>
</div></body></html>
